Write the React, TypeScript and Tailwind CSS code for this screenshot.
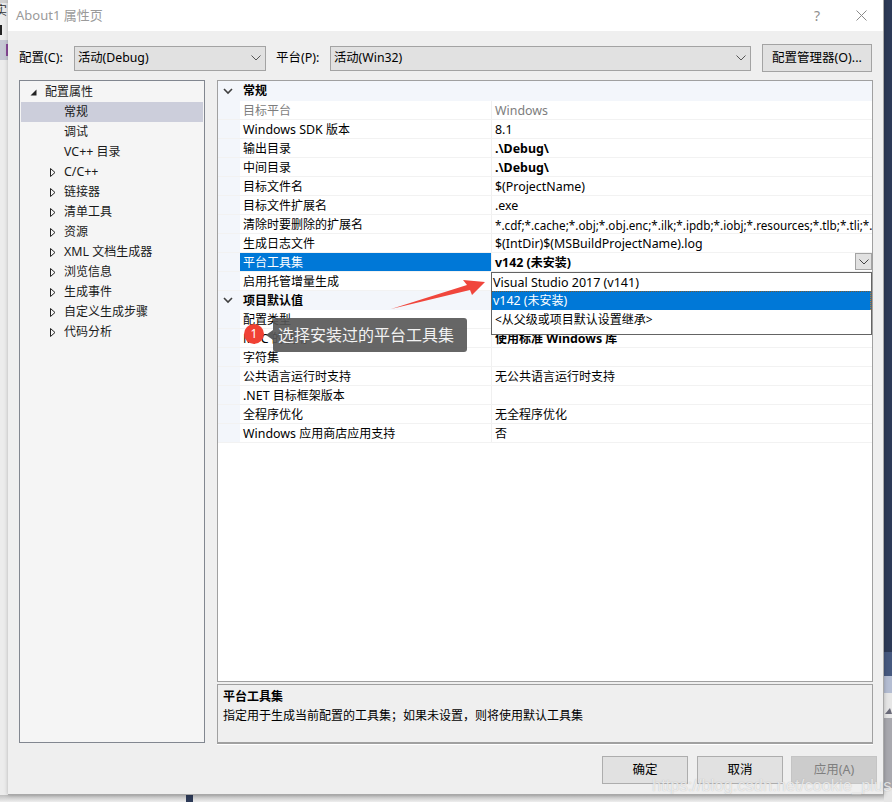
import React from "react";

const FONT = { fontFamily: '"Noto Sans", "Noto Sans CJK SC", sans-serif' };

type Row = { n: string; v?: string; bold?: boolean; gray?: boolean; sel?: boolean; tight?: boolean };

const general: Row[] = [
  { n: "目标平台", v: "Windows", gray: true },
  { n: "Windows SDK 版本", v: "8.1" },
  { n: "输出目录", v: ".\\Debug\\", bold: true },
  { n: "中间目录", v: ".\\Debug\\", bold: true },
  { n: "目标文件名", v: "$(ProjectName)" },
  { n: "目标文件扩展名", v: ".exe" },
  { n: "清除时要删除的扩展名", v: "*.cdf;*.cache;*.obj;*.obj.enc;*.ilk;*.ipdb;*.iobj;*.resources;*.tlb;*.tli;*.tlh;*.tmp;*.rsp", tight: true },
  { n: "生成日志文件", v: "$(IntDir)$(MSBuildProjectName).log" },
  { n: "平台工具集", v: "v142 (未安装)", bold: true, sel: true },
  { n: "启用托管增量生成", v: "" },
];

const defaults: Row[] = [
  { n: "配置类型", v: "" },
  { n: "MFC 的使用", v: "使用标准 Windows 库", bold: true },
  { n: "字符集", v: "" },
  { n: "公共语言运行时支持", v: "无公共语言运行时支持" },
  { n: ".NET 目标框架版本", v: "" },
  { n: "全程序优化", v: "无全程序优化" },
  { n: "Windows 应用商店应用支持", v: "否" },
];

const tree: { t: string; arrow?: boolean; sel?: boolean }[] = [
  { t: "常规", sel: true },
  { t: "调试" },
  { t: "VC++ 目录" },
  { t: "C/C++", arrow: true },
  { t: "链接器", arrow: true },
  { t: "清单工具", arrow: true },
  { t: "资源", arrow: true },
  { t: "XML 文档生成器", arrow: true },
  { t: "浏览信息", arrow: true },
  { t: "生成事件", arrow: true },
  { t: "自定义生成步骤", arrow: true },
  { t: "代码分析", arrow: true },
];

/* Latin runs are slightly wider in the reference than the CJK runs beside them. */
function T({ s }: { s?: string }) {
  if (!s) return null;
  const parts = s.split(/([\x00-\x7f]+)/).filter(Boolean);
  return (
    <>
      {parts.map((p, i) =>
        /^[\x00-\x7f]+$/.test(p) ? (
          <span key={i} className="text-[12.4px]">
            {p}
          </span>
        ) : (
          <span key={i}>{p}</span>
        )
      )}
    </>
  );
}

function Chevron({ className = "" }: { className?: string }) {
  return (
    <svg width="10" height="6" viewBox="0 0 10 6" className={className} fill="none" stroke="currentColor" strokeWidth="1">
      <path d="M0.5 0.5 L5 5 L9.5 0.5" />
    </svg>
  );
}

function Select({ label, w }: { label: string; w: string }) {
  return (
    <div className={`${w} h-[25px] flex items-center justify-between bg-[#e1e1e1] border border-[#a3a3a3] pl-[3px] pr-[4px] text-[12.3px] text-black`}>
      <span>{label}</span>
      <Chevron className="text-[#555555]" />
    </div>
  );
}

function GroupHeader({ t, top = false }: { t: string; top?: boolean }) {
  return (
    <div className={`flex shrink-0 bg-[#f3f6fb] ${top ? "h-[20px]" : "h-[19px]"}`}>
      <div className="w-[22px] flex items-center justify-center pr-[2px]">
        <svg width="10" height="7" viewBox="0 0 10 7" fill="none" stroke="#404040" strokeWidth="1.6">
          <path d="M1 1 L5 5 L9 1" />
        </svg>
      </div>
      <div className="font-bold pl-[3px] leading-[20px]">{t}</div>
    </div>
  );
}

function PropRow({ r }: { r: Row }) {
  return (
    <div className="h-[19px] flex shrink-0 border-b border-[#f2f2f2]">
      <div className="w-[22px] shrink-0 bg-[#f3f6fb]" />
      <div
        className={`w-[251px] shrink-0 pl-[3px] leading-[20px] whitespace-nowrap ${
          r.sel ? "bg-[#0078d7] text-white" : r.gray ? "text-[#7d7d7d]" : "text-black"
        }`}
      >
        <T s={r.n} />
      </div>
      <div
        className={`flex-1 min-w-0 border-l border-[#f0f0f0] pl-[3px] leading-[20px] whitespace-nowrap overflow-hidden flex justify-between ${
          r.gray ? "text-[#7d7d7d]" : "text-black"
        } ${r.bold ? "font-bold" : ""}`}
      >
        {r.tight ? <span className="text-[11.7px]">{r.v}</span> : (
          <span>
            <T s={r.v} />
          </span>
        )}
        {r.sel && (
          <span className="w-[17px] h-[17px] bg-[#e1e1e1] border border-[#a3a3a3] flex items-center justify-center text-[#444444] shrink-0">
            <Chevron />
          </span>
        )}
      </div>
    </div>
  );
}

function Btn({ t, off = false, cls = "" }: { t: string; off?: boolean; cls?: string }) {
  return (
    <div
      className={`w-[86px] h-[28px] flex items-center justify-center border text-[12.5px] ${cls} ${
        off ? "bg-[#cccccc] border-[#c4c4c4] text-[#7f7f7f]" : "bg-[#e1e1e1] border-[#adadad] text-black"
      }`}
    >
      {t}
    </div>
  );
}

export default function App() {
  return (
    <div className="relative w-[892px] h-[802px] overflow-hidden bg-[#2d3a57] text-[12px]" style={FONT}>
      {/* desktop behind the dialog */}
      <div className="absolute left-0 top-0 w-[8px] h-[802px] bg-[#ececec] overflow-hidden">
        <div className="h-[3px] bg-[#d0d0d0]" />
        <div className="absolute left-[-5px] top-[2px] text-[12px] text-[#333333]">实</div>
        <div className="absolute left-0 top-[25px] w-[2px] h-[10px] bg-[#222222]" />
        <div className="absolute left-0 top-[40px] w-[8px] h-[20px] bg-[#c6c8d4]" />
        <div className="absolute left-[6px] top-[44px] w-[2px] h-[12px] bg-[#8a4a9a]" />
      </div>
      <div className="absolute left-0 top-[795px] w-[892px] h-[7px] bg-gradient-to-b from-[#bfbfbf] to-[#eeeeee]" />
      <div className="absolute left-[186px] top-[794px] w-[7px] h-[8px] bg-[#2d3a57]" />
      <div className="absolute left-[884px] top-[652px] w-[8px] h-[24px] bg-[#46597f]" />
      <div className="absolute left-[884px] top-[676px] w-[8px] h-[17px] bg-[#b4bdd2]" />
      <div className="absolute left-[884px] top-[693px] w-[8px] h-[109px] bg-[#e6e6e6]" />
      <div className="absolute left-[884px] top-[718px] w-[8px] h-[70px] bg-[#a8a8ae]" />
      <div className="absolute left-[885px] top-[708px] w-0 h-0 border-l-[5px] border-r-[2px] border-b-[6px] border-l-transparent border-r-transparent border-b-[#6a6a78]" />

      {/* dialog */}
      <div className="relative ml-[8px] w-[876px] h-[795px] flex flex-col bg-[#efefef] border-r border-b border-[#a9a9a9] shadow-[0_0_4px_rgba(0,0,0,0.25)]">
        <div className="h-[31px] shrink-0 bg-white flex items-center justify-between pl-[8px] pr-[16px] text-[13px] text-[#9a9a9a]">
          <span>About1 属性页</span>
          <div className="flex items-center gap-[36px]">
            <span className="text-[14px] text-[#8f8f8f]">?</span>
            <svg width="11" height="11" viewBox="0 0 11 11" fill="none" stroke="#8a8a8a" strokeWidth="1">
              <path d="M0.5 0.5 L10.5 10.5 M10.5 0.5 L0.5 10.5" />
            </svg>
          </div>
        </div>

        <div className="flex flex-col pl-[11px] pr-[10px] flex-1 min-h-0">
          {/* configuration bar */}
          <div className="h-[49px] shrink-0 flex items-center text-[12.5px] text-black pt-[5px]">
            <span className="w-[55px]">配置(C):</span>
            <Select label="活动(Debug)" w="w-[192px]" />
            <span className="ml-[10px] w-[54px]">平台(P):</span>
            <Select label="活动(Win32)" w="w-[421px]" />
            <div className="ml-[11px] w-[110px] h-[28px] flex items-center justify-center bg-[#e1e1e1] border border-[#a3a3a3]">
              配置管理器(O)...
            </div>
          </div>

          {/* panels */}
          <div className="flex gap-[12px] h-[664px] shrink-0">
            <div className="w-[186px] h-[663px] shrink-0 bg-[#f5f5f5] border border-[#828790] pt-[1px] px-[1px] text-[#1a1a1a]">
              <div className="h-[20px] flex items-center">
                <svg width="7" height="7" viewBox="0 0 7 7" className="ml-[9px] mr-[8px]">
                  <path d="M6.5 0.5 V6.5 H0.5 Z" fill="#222222" />
                </svg>
                <span>配置属性</span>
              </div>
              {tree.map((it) => (
                <div key={it.t} className={`h-[20px] w-[182px] flex items-center ${it.sel ? "bg-[#cccedb]" : ""}`}>
                  <span className="w-[43px] flex justify-end pr-[8px]">
                    {it.arrow && (
                      <svg width="6" height="9" viewBox="0 0 6 9" fill="none" stroke="#222222">
                        <path d="M0.5 0.5 L5 4.5 L0.5 8.5 Z" />
                      </svg>
                    )}
                  </span>
                  <span className="whitespace-nowrap">
                    <T s={it.t} />
                  </span>
                </div>
              ))}
            </div>

            <div className="flex-1 min-w-0 flex flex-col gap-[2px]">
              <div className="h-[602px] bg-white border border-[#a0a0a0] flex flex-col overflow-hidden">
                <GroupHeader t="常规" top />
                {general.map((r) => (
                  <PropRow key={r.n} r={r} />
                ))}
                <GroupHeader t="项目默认值" />
                {defaults.map((r) => (
                  <PropRow key={r.n} r={r} />
                ))}
              </div>
              <div className="h-[60px] bg-[#efefef] border border-[#a0a0a0] border-b-[2px] shadow-[0_1px_0_#ffffff] pl-[5px] pt-[2px] leading-[19px] text-black">
                <div className="font-bold">平台工具集</div>
                <div>指定用于生成当前配置的工具集；如果未设置，则将使用默认工具集</div>
              </div>
            </div>
          </div>

          {/* footer */}
          <div className="flex justify-end gap-[8px] mt-[12px] -mr-[4px]">
            <Btn t="确定" cls="mr-[1px]" />
            <Btn t="取消" />
            <Btn t="应用(A)" off />
          </div>
        </div>
      </div>

      {/* open dropdown */}
      <div className="absolute left-[491px] top-[272px] w-[381px] h-[63px] bg-white border border-[#646464] text-black leading-[19px]">
        <div className="h-[18px] pl-[1px] text-[12.5px]">Visual Studio 2017 (v141)</div>
        <div className="h-[19px] pl-[1px] bg-[#0078d7] text-white border-t border-r border-dotted border-t-[#7a5a30] border-r-[#c08030] leading-[18px]">
          <T s="v142 (未安装)" />
        </div>
        <div className="h-[18px] pl-[3px]">&lt;从父级或项目默认设置继承&gt;</div>
      </div>

      {/* annotation */}
      <svg className="absolute left-[385px] top-[272px]" width="110" height="44" viewBox="0 0 110 44">
        <path d="M6 37 L82 13 L78 8 L100 10 L87 23 L85 18 Z" fill="#f0463c" />
      </svg>
      <div className="absolute left-[244px] top-[324px] w-[20px] h-[20px] rounded-full bg-[#f04134] text-white flex items-center justify-center text-[12px]">
        1
      </div>
      <div className="absolute left-[266px] top-[330px] w-0 h-0 border-y-[5px] border-r-[7px] border-y-transparent border-r-[#5c5c5c]" />
      <div className="absolute left-[273px] top-[318px] w-[194px] h-[34px] rounded-[3px] bg-[#555555]/90 text-[#f2f2f2] text-[16px] flex items-center pl-[5px] whitespace-nowrap">
        选择安装过的平台工具集
      </div>

      {/* watermark */}
      <div
        className="absolute left-[652px] top-[773px] text-[16.5px] text-white/70 whitespace-nowrap [text-shadow:0_0_1px_rgba(140,140,140,0.6)]"
        style={{ fontFamily: '"Liberation Sans", sans-serif' }}
      >
        https://blog.csdn.net/cookie_plus
      </div>
    </div>
  );
}
